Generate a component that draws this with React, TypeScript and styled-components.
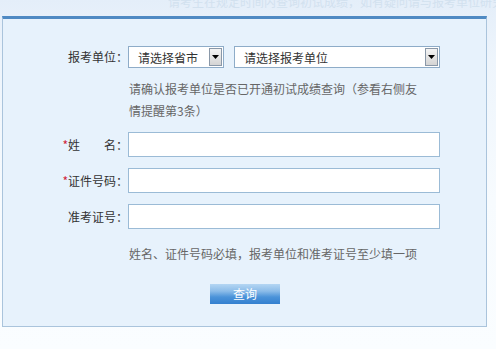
import * as React from "react";
import styled, { createGlobalStyle } from "styled-components";

const GlobalStyle = createGlobalStyle`
  html, body {
    margin: 0;
    padding: 0;
  }
  body {
    width: 496px;
    height: 349px;
    overflow: hidden;
    background: linear-gradient(to bottom, #e4eef9 0px, #eef5fc 60px, #f7fbfe 200px, #fafdff 349px);
    font-family: "Noto Sans CJK SC", "Noto Sans", sans-serif;
    font-size: 12px;
    color: #333;
  }
`;

const Page = styled.div`
  padding-left: 2px;
`;

const Caption = styled.div`
  height: 16px;
  overflow: hidden;
  padding-left: 166px;
  display: flex;
  align-items: flex-end;
  white-space: nowrap;
  color: #d2e1ef;
  font-size: 12px;
  line-height: 12px;
`;

const CaptionText = styled.span`
  display: block;
  margin-bottom: 8px;
`;

const Panel = styled.div`
  width: 485px;
  height: 311px;
  box-sizing: border-box;
  border: 1px solid #aac4dc;
  border-top: 3px solid #4f8ac3;
  background: #e7f2fc;
  padding-top: 27px;
`;

const Form = styled.div`
  display: grid;
  grid-template-columns: 125px 312px;
  row-gap: 11px;
  align-items: center;
`;

const Label = styled.div`
  text-align: right;
  color: #333;
  white-space: pre;
  line-height: 22px;
`;

const Star = styled.span`
  color: #d0223a;
`;

const Field = styled.div`
  display: flex;
  gap: 10px;
`;

const SelectBox = styled.div<{ $width: number }>`
  width: ${({ $width }) => $width}px;
  height: 22px;
  box-sizing: border-box;
  border: 1px solid #8eacc8;
  background: #fff;
  display: flex;
  align-items: center;
  justify-content: space-between;
  padding-left: 9px;
  padding-right: 1px;
  color: #333;
  font-size: 12px;
`;

const Arrow = styled.div`
  width: 13px;
  height: 18px;
  box-sizing: border-box;
  border: 1px solid #8a98a8;
  background: linear-gradient(to bottom, #f4f4f4, #d4d4d4);
  display: flex;
  align-items: center;
  justify-content: center;
`;

const Hint = styled.div`
  grid-column: 2;
  width: 295px;
  padding-left: 1px;
  color: #666;
  line-height: 22px;
  margin-top: -1px;
  margin-bottom: -1px;
`;

const TextInput = styled.input`
  width: 312px;
  height: 25px;
  box-sizing: border-box;
  border: 1px solid #9bbbd6;
  background: #fff;
  outline: none;
  margin: 0;
`;

const Note = styled.div`
  grid-column: 2;
  padding-left: 1px;
  color: #666;
  line-height: 22px;
  margin-top: 3px;
`;

const ButtonRow = styled.div`
  grid-column: 2;
  padding-left: 82px;
  margin-top: 8px;
`;

const QueryButton = styled.button`
  width: 70px;
  height: 20px;
  border: none;
  padding: 0;
  background: linear-gradient(to bottom, #b4d6f3 0%, #8dbde9 35%, #4b93d9 65%, #3480cf 100%);
  color: #fff;
  font-family: inherit;
  font-size: 12px;
  line-height: 20px;
  cursor: pointer;
`;

const DownArrow: React.FC = () => (
  <svg width="7" height="4" viewBox="0 0 7 4">
    <path d="M0 0h7L3.5 4z" fill="#000" />
  </svg>
);

const Select: React.FC<{ width: number; placeholder: string }> = ({ width, placeholder }) => (
  <SelectBox $width={width}>
    <span>{placeholder}</span>
    <Arrow>
      <DownArrow />
    </Arrow>
  </SelectBox>
);

export default function App() {
  return (
    <>
      <GlobalStyle />
      <Page>
        <Caption>
          <CaptionText>请考生在规定时间内查询初试成绩，如有疑问请与报考单位研究生招生部门联系</CaptionText>
        </Caption>
        <Panel>
          <Form>
            <Label>报考单位：</Label>
            <Field>
              <Select width={96} placeholder="请选择省市" />
              <Select width={206} placeholder="请选择报考单位" />
            </Field>
            <Hint>请确认报考单位是否已开通初试成绩查询（参看右侧友情提醒第3条）</Hint>

            <Label>
              <Star>*</Star>姓　　名：
            </Label>
            <TextInput type="text" />

            <Label>
              <Star>*</Star>证件号码：
            </Label>
            <TextInput type="text" />

            <Label>准考证号：</Label>
            <TextInput type="text" />

            <Note>姓名、证件号码必填，报考单位和准考证号至少填一项</Note>
            <ButtonRow>
              <QueryButton type="button">查询</QueryButton>
            </ButtonRow>
          </Form>
        </Panel>
      </Page>
    </>
  );
}
